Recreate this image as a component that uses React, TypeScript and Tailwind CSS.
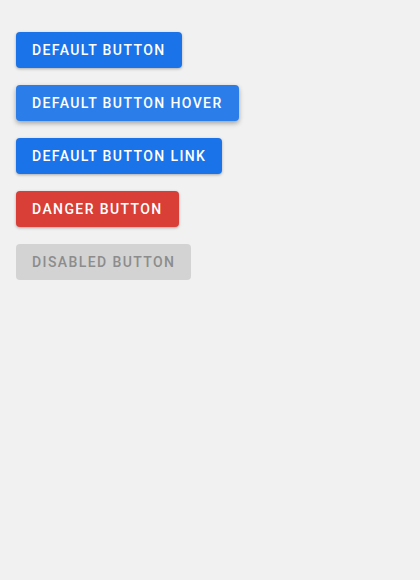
import React from 'react'

const base =
  "h-9 px-4 rounded text-[14px] font-medium uppercase tracking-[1.4px] leading-9 whitespace-nowrap"

export default function App() {
  return (
    <div className="min-h-[580px] bg-[#f1f1f1] p-4 font-['Roboto',sans-serif]">
      <div className="flex flex-col items-start gap-[17px] pt-4">
        <button className={base + " bg-[#1a73e8] text-white shadow-[0_1px_3px_rgba(0,0,0,0.3)]"}>
          Default Button
        </button>
        <button className={base + " bg-[#2b7ee9] text-white shadow-[0_2px_4px_rgba(0,0,0,0.25),0_3px_6px_rgba(0,0,0,0.1)]"}>
          Default Button Hover
        </button>
        <a href="#" className={base + " inline-block bg-[#1a73e8] text-white shadow-[0_1px_3px_rgba(0,0,0,0.3)]"}>
          Default Button Link
        </a>
        <button className={base + " bg-[#d93e37] text-white shadow-[0_1px_3px_rgba(0,0,0,0.3)]"}>
          Danger Button
        </button>
        <button disabled className={base + " bg-[#d3d3d3] text-[#8c8c8c]"}>
          Disabled Button
        </button>
      </div>
    </div>
  )
}
